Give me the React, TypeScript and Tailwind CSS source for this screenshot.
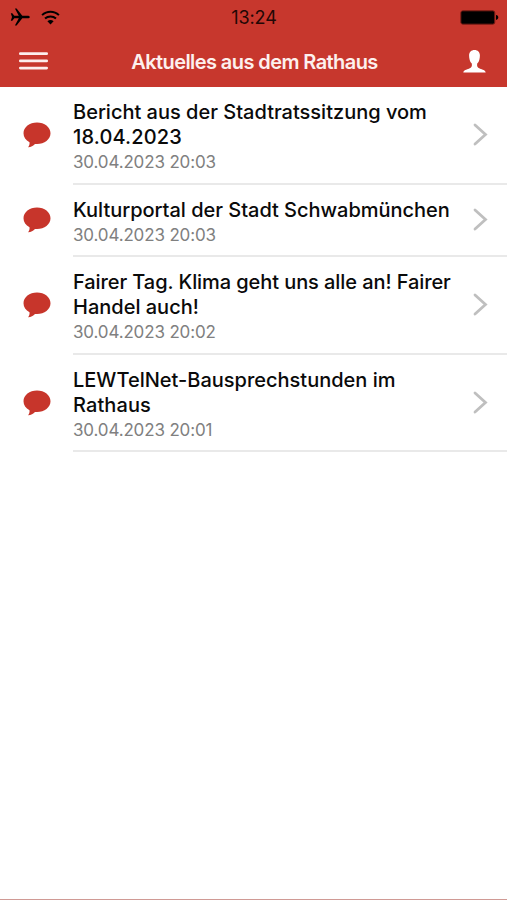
import React from "react";

type NewsItem = {
  lines: { text: string; className: string }[];
  date: string;
  rowClassName: string;
};

const newsItems: NewsItem[] = [
  {
    lines: [
      {
        text: "Bericht aus der Stadtratssitzung vom",
        className: "tracking-[0px]",
      },
      { text: "18.04.2023", className: "tracking-[0.15px]" },
    ],
    date: "30.04.2023 20:03",
    rowClassName: "h-[98px]",
  },
  {
    lines: [
      {
        text: "Kulturportal der Stadt Schwabmünchen",
        className: "tracking-[-0.02px]",
      },
    ],
    date: "30.04.2023 20:03",
    rowClassName: "h-[72px]",
  },
  {
    lines: [
      {
        text: "Fairer Tag. Klima geht uns alle an! Fairer",
        className: "tracking-[-0.08px]",
      },
      { text: "Handel auch!", className: "tracking-[0px]" },
    ],
    date: "30.04.2023 20:02",
    rowClassName: "h-[98px]",
  },
  {
    lines: [
      { text: "LEWTelNet-Bausprechstunden im", className: "tracking-[0px]" },
      { text: "Rathaus", className: "tracking-[0.1px]" },
    ],
    date: "30.04.2023 20:01",
    rowClassName: "h-[97px]",
  },
];

const StatusBar: React.FC = () => {
  return (
    <div className="grid grid-cols-3 items-center h-[35px] pl-[10px] pr-[8px] text-black">
      <div className="flex items-center gap-[11px] pb-[1px]">
        <svg className="w-[20px] h-[18px]" viewBox="0 0 20 18" fill="currentColor">
          <path d="M.8 5.200h1.500l2 2.500h4.500L5.300 1.200 5 .5h1.600l5.700 7.200h5.400c1.300 0 2.100.6 2.100 1.300s-.8 1.300-2.100 1.300h-5.400l-5.700 7.200H5l.3-.7 3.500-6.500H4.300l-2 2.500H.8L2 9z" />
        </svg>
        <svg className="w-[19px] h-[15px]" viewBox="0 0 19 15" fill="none">
          <path
            d="M1.100 5.100a12 12 0 0 1 16.800 0M4 8.600a8 8 0 0 1 11 0"
            stroke="currentColor"
            strokeWidth="2"
          />
          <path
            d="M6.400 11.300a4.600 4.600 0 0 1 6.200 0l-3.100 3.200z"
            fill="currentColor"
          />
        </svg>
      </div>
      <p className="text-center text-[18px] leading-none tracking-[-0.1px] text-[#220705] pr-[1px]">
        13:24
      </p>
      <div className="flex justify-end">
        <svg className="w-[39px] h-[15px]" viewBox="0 0 39 15">
          <rect
            x="0.8"
            y="0.8"
            width="34"
            height="13.4"
            rx="2"
            fill="#000"
            stroke="#7d1e17"
            strokeWidth="1"
          />
          <path d="M36 5.100c1.500.3 2.300 1.200 2.300 2.400S37.500 9.600 36 9.900z" fill="#000" />
        </svg>
      </div>
    </div>
  );
};

const NavBar: React.FC = () => {
  return (
    <div className="flex items-center justify-between h-[52px] pl-[19px] pr-[21px] text-white">
      <button>
        <svg className="block w-[29px] h-[18px]" viewBox="0 0 29 18" fill="#fdeeed">
          <rect y="0.3" width="29" height="2.700" rx="1.300" />
          <rect y="7.500" width="29" height="2.700" rx="1.300" />
          <rect y="14.700" width="29" height="2.700" rx="1.300" />
        </svg>
      </button>
      <h1 className="pt-[2px] pr-[2px] text-[20px] leading-none font-semibold tracking-[-0.58px] whitespace-nowrap text-[#fdf0ee]">
        Aktuelles aus dem Rathaus
      </h1>
      <button>
        <svg className="block w-[23px] h-[23px]" viewBox="0 0 23 23" fill="currentColor">
          <path d="M11.500 0C8.200 0 6.100 2.200 6.100 5.400c0 1.500.2 2.800.5 4 .4 1.800 1.200 3.200 2.200 4.100.5 2.800-.3 4-2.500 4.900C3.400 19.600.6 19.900.3 22.500h22.400c-.3-2.600-3.100-2.900-6-4.100-2.200-.9-3-2.100-2.500-4.900 1-.9 1.800-2.300 2.200-4.100.3-1.200.5-2.500.5-4C16.900 2.200 14.800 0 11.500 0z" />
        </svg>
      </button>
    </div>
  );
};

const NewsRow: React.FC<{ item: NewsItem }> = ({ item }) => {
  return (
    <li className={`flex ${item.rowClassName}`}>
      <div className="flex items-center w-[73px] pl-[23px] pb-[2px]">
        <svg className="w-[28px] h-[26px]" viewBox="0 0 28 26" fill="#c7352b">
          <path d="M14 .5C6.500.5.5 5.200.5 11.300c0 3.800 2.300 7 6 9 .3 2-.3 3.600-1.500 5 3-.2 5.300-1.500 7-3.300l2 .1c7.500 0 13.500-4.700 13.500-10.800S21.500.5 14 .5z" />
        </svg>
      </div>
      <div className="flex flex-1 items-center justify-between pr-[19px] border-b-2 border-[#e9e9e9]">
        <div className="pt-[4px] whitespace-nowrap">
          {item.lines.map((line) => (
            <p
              key={line.text}
              className={`text-[20px] leading-[25px] font-medium text-[#0a0a0a] ${line.className}`}
            >
              {line.text}
            </p>
          ))}
          <p className="text-[17px] leading-[24px] tracking-[-0.15px] text-[#808080]">
            {item.date}
          </p>
        </div>
        <svg className="w-[15px] h-[24px] pb-[1px]" viewBox="0 0 15 23" fill="none">
          <path
            d="M2 2l10.500 9.500L2 21"
            stroke="#bfbfbf"
            strokeWidth="2.800"
            strokeLinecap="round"
          />
        </svg>
      </div>
    </li>
  );
};

const App: React.FC = () => {
  return (
    <div className="flex flex-col w-full h-[900px] overflow-hidden bg-white font-['Inter',sans-serif]">
      <header className="h-[87px] bg-[#c7372d]">
        <StatusBar />
        <NavBar />
      </header>
      <ul className="flex-1">
        {newsItems.map((item) => (
          <NewsRow key={item.lines[0].text} item={item} />
        ))}
      </ul>
      <div className="h-px bg-[#d09a95]" />
    </div>
  );
};

export default App;
